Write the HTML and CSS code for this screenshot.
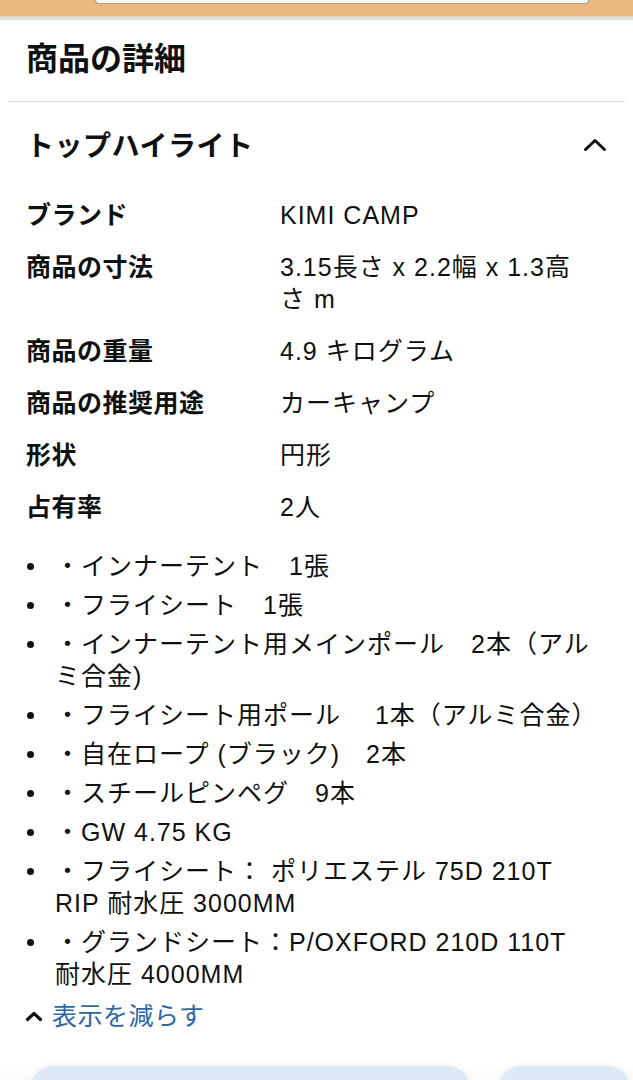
FILE: index.html
```html
<!DOCTYPE html>
<html lang="ja">
<head>
<meta charset="utf-8">
<title>商品の詳細</title>
<link rel="stylesheet" href="styles.css">
</head>
<body>
<div class="topbar"><div class="search"></div></div>
<div class="topline"></div>
<main class="page">
  <h2 class="title">商品の詳細</h2>
  <hr class="divider">
  <section class="highlights">
    <div class="hl-head">
      <h3>トップハイライト</h3>
      <svg class="chev" width="24" height="15" viewBox="0 0 24 15"><polyline points="2.5,12.5 12,3.5 21.5,12.5" fill="none" stroke="#0f1111" stroke-width="3" stroke-linecap="round" stroke-linejoin="round"/></svg>
    </div>
    <div class="specs">
      <div class="row"><div class="label">ブランド</div><div class="value">KIMI CAMP</div></div>
      <div class="row"><div class="label">商品の寸法</div><div class="value">3.15長さ x 2.2幅 x 1.3高<br>さ m</div></div>
      <div class="row"><div class="label">商品の重量</div><div class="value">4.9 キログラム</div></div>
      <div class="row"><div class="label">商品の推奨用途</div><div class="value">カーキャンプ</div></div>
      <div class="row"><div class="label">形状</div><div class="value">円形</div></div>
      <div class="row"><div class="label">占有率</div><div class="value">2人</div></div>
    </div>
    <ul class="bullets">
      <li><span class="dot"></span><span class="txt">・インナーテント　1張</span></li>
      <li><span class="dot"></span><span class="txt">・フライシート　1張</span></li>
      <li><span class="dot"></span><span class="txt">・インナーテント用メインポール　2本（アル<br>ミ合金)</span></li>
      <li><span class="dot"></span><span class="txt">・フライシート用ポール　 1本（アルミ合金）</span></li>
      <li><span class="dot"></span><span class="txt">・自在ロープ (ブラック)　2本</span></li>
      <li><span class="dot"></span><span class="txt">・スチールピンペグ　9本</span></li>
      <li><span class="dot"></span><span class="txt">・GW 4.75 KG</span></li>
      <li><span class="dot"></span><span class="txt">・フライシート： ポリエステル 75D 210T<br>RIP 耐水圧 3000MM</span></li>
      <li><span class="dot"></span><span class="txt">・グランドシート：P/OXFORD 210D 110T<br>耐水圧 4000MM</span></li>
    </ul>
    <a class="less" href="#"><svg class="less-chev" width="18" height="11" viewBox="0 0 18 11"><polyline points="2.5,8.5 9,2.5 15.5,8.5" fill="none" stroke="#0f1111" stroke-width="3.2" stroke-linecap="round" stroke-linejoin="round"/></svg>表示を減らす</a>
  </section>
</main>
<div class="bottombar">
  <div class="btn btn-a"></div>
  <div class="btn btn-b"></div>
</div>
</body>
</html>
```

FILE: styles.css
```css
* { box-sizing: border-box; }

body {
  margin: 0;
  background: #ffffff;
  color: #0f1111;
  font-family: "Liberation Sans", "Noto Sans CJK JP", sans-serif;
  overflow: hidden;
}

.topbar {
  height: 17px;
  background: #ecb880;
  padding: 0 44px 0 95px;
  border-bottom: 1px solid #f4d2a8;
}

.search {
  height: 4px;
  background: #f7f7f5;
  border: 1px solid #9aa09a;
  border-top: none;
  border-radius: 0 0 9px 9px;
}

.topline {
  height: 3px;
  background: #d7e0e7;
}

.page {
  padding: 0 8px;
}

.title {
  margin: 0;
  padding: 19px 18px 0;
  font-size: 32px;
  line-height: 40px;
  font-weight: 700;
}

.divider {
  margin: 22px 0 0;
  border: 0;
  border-top: 1px solid #d5d9d9;
  height: 0;
}

.hl-head {
  display: flex;
  justify-content: space-between;
  align-items: center;
  padding: 27px 18px 0;
}

.hl-head h3 {
  margin: 0;
  font-size: 28px;
  line-height: 36px;
  font-weight: 700;
  letter-spacing: 0.5px;
}

.chev {
  margin-top: -6px;
}

.specs {
  margin-top: 24px;
  padding: 0 18px;
}

.row {
  display: grid;
  grid-template-columns: 254px 1fr;
  padding: 10px 0;
  font-size: 25px;
  line-height: 32px;
  letter-spacing: 1px;
}

.label {
  font-weight: 700;
  letter-spacing: 0.5px;
}

.bullets {
  list-style: none;
  margin: 17px 0 0;
  padding: 0 18px;
  font-size: 25px;
  line-height: 32px;
  letter-spacing: 1px;
}

.bullets li {
  display: flex;
  margin-bottom: 7px;
}

.dot {
  flex: 0 0 29px;
  height: 32px;
  display: flex;
  align-items: center;
}

.dot::before {
  content: "";
  width: 7px;
  height: 7px;
  margin-left: 1px;
  border-radius: 50%;
  background: #0f1111;
}

.less {
  display: flex;
  align-items: center;
  margin-top: 10px;
  padding: 0 17px;
  font-size: 25px;
  line-height: 32px;
  letter-spacing: 0.5px;
  color: #2d67a3;
  text-decoration: none;
}

.less-chev {
  margin-right: 9px;
}

.bottombar {
  display: flex;
  gap: 29px;
  margin-top: 34px;
  padding-left: 31px;
  background: linear-gradient(#ffffff, #f1f1f1);
}

.btn {
  height: 50px;
  background: #dbeaf6;
  border-radius: 22px 22px 0 0;
  box-shadow: 0 -1px 6px rgba(0, 0, 0, 0.06);
}

.btn-a {
  width: 439px;
}

.btn-b {
  flex: 1;
  margin-right: 3px;
}
```
